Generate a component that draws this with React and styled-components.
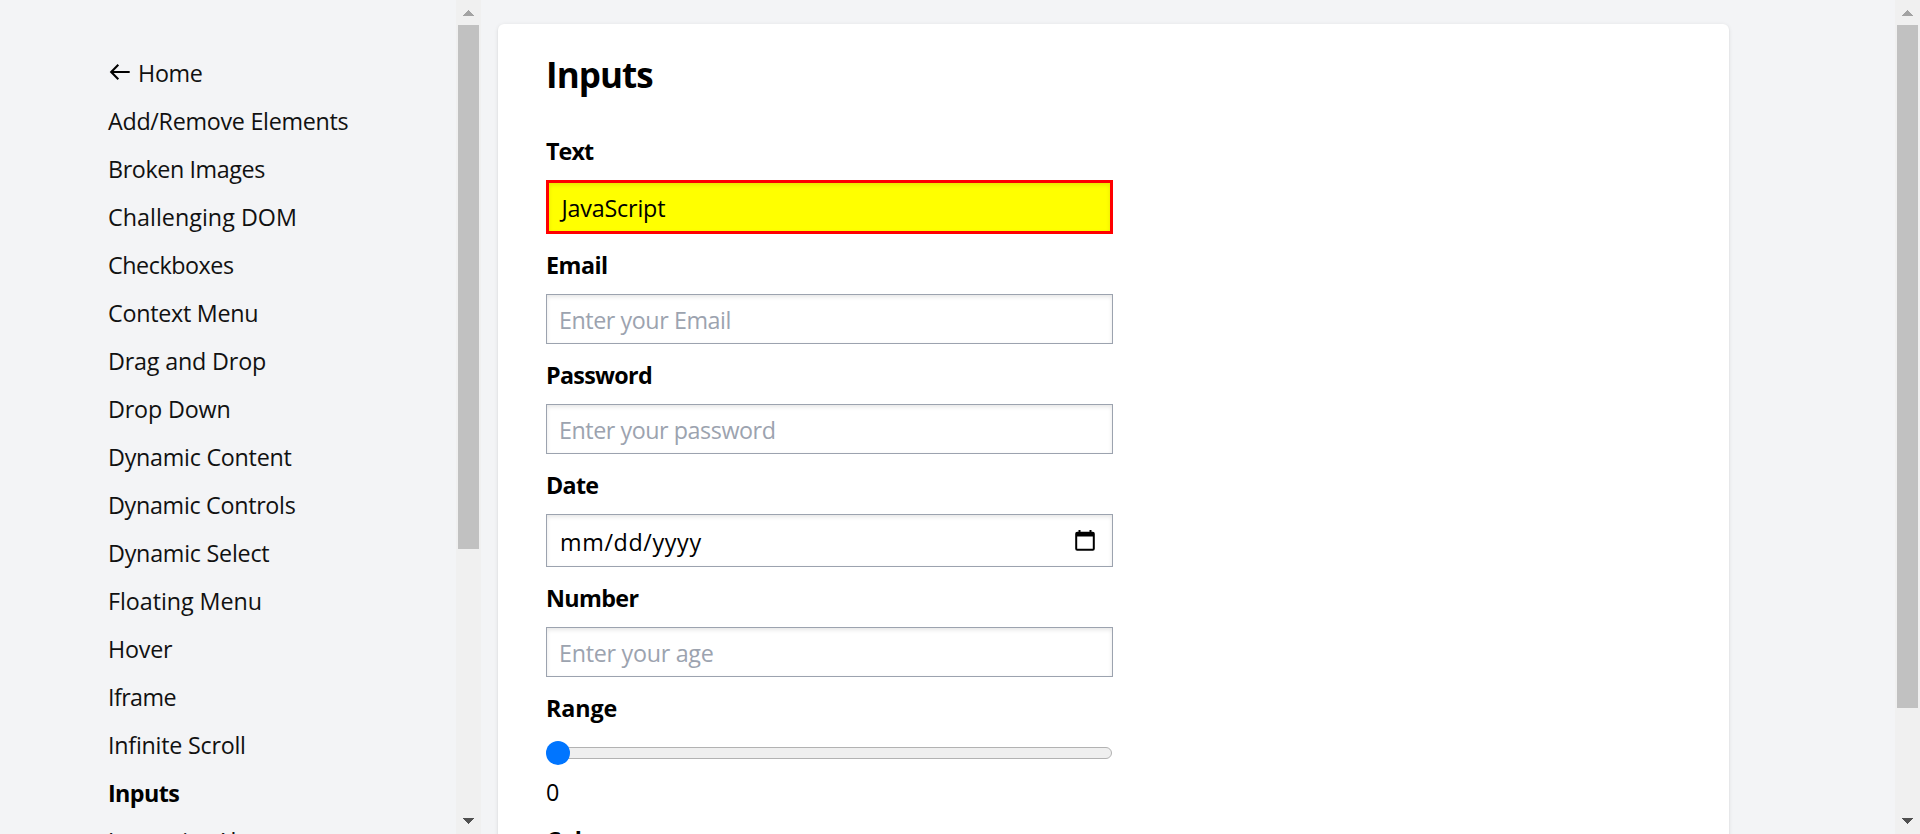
import React from "react";
import styled, { createGlobalStyle } from "styled-components";

const GlobalStyle = createGlobalStyle`
  *, *::before, *::after { box-sizing: border-box; }
  html, body { margin: 0; height: 100%; overflow: hidden; }
  body {
    background: #f3f4f6;
    color: #000;
    font-family: "Segoe UI", "Open Sans", "Noto Sans", sans-serif;
    font-size: 23.3px;
    line-height: 36px;
  }
`;

const Page = styled.div`
  display: flex;
  height: 834px;
  overflow: hidden;
`;

const Sidebar = styled.nav`
  flex: none;
  width: 456px;
  padding: 55px 0 0 108px;
  display: flex;
  flex-direction: column;
  gap: 12px;
`;

const NavItem = styled.a`
  flex: none;
  display: flex;
  align-items: center;
  height: 36px;
  white-space: nowrap;
  color: ${(p) => (p.$active ? "#000" : "#111")};
  font-weight: ${(p) => (p.$active ? 700 : 400)};
  letter-spacing: ${(p) => p.$tracking || 0}px;
`;

const Arrow = styled.svg`
  flex: none;
  width: 24px;
  height: 24px;
  margin: -2px 6px 0 0;
`;

const Main = styled.main`
  flex: 1;
  display: flex;
  padding: 24px 166px 0 17px;
`;

const Card = styled.section`
  flex: 1;
  height: 900px;
  padding: 24px 48px;
  background: #fff;
  border-radius: 6px;
  box-shadow: 0 1px 4px rgba(0, 0, 0, 0.1), 0 1px 2px rgba(0, 0, 0, 0.06);
`;

const Title = styled.h1`
  margin: 0 0 30px;
  height: 54px;
  font-size: 35px;
  line-height: 54px;
  font-weight: 700;
  letter-spacing: -0.95px;
`;

const Form = styled.div`
  width: 567px;
  display: flex;
  flex-direction: column;
  gap: 12px;
`;

const Label = styled.div`
  height: 36px;
  padding-top: 1px;
  font-weight: 700;
  white-space: nowrap;
  letter-spacing: ${(p) => p.$tracking || 0}px;
`;

const Field = styled.div`
  display: flex;
  align-items: center;
  justify-content: space-between;
  height: ${(p) => p.$height || 50}px;
  padding: 2px 17px 0 ${(p) => p.$indent || 12}px;
  border: 1px solid #9ca3af;
  background: #fff;
  box-shadow: inset 0 2px 4px rgba(0, 0, 0, 0.1);
  color: ${(p) => (p.$filled ? "#000" : "#9ca3af")};
  white-space: nowrap;
  letter-spacing: ${(p) => p.$tracking || 0}px;
`;

const HighlightedField = styled(Field)`
  border: 3px solid #f00;
  background: #ff0;
`;

const CalendarIcon = styled.svg`
  width: 20px;
  height: 22px;
  margin-top: -1px;
`;

const RangeRow = styled.div`
  display: flex;
  align-items: center;
  height: 32px;
  margin-bottom: -8px;
  padding-top: 8px;
`;

const Thumb = styled.div`
  flex: none;
  width: 24px;
  height: 24px;
  margin-top: -8px;
  border-radius: 50%;
  background: #0075ff;
  z-index: 1;
`;

const Track = styled.div`
  flex: 1;
  height: 12px;
  margin: -8px 1px 0 -22px;
  border: 1px solid #b2b2b2;
  border-radius: 6px;
  background: #efefef;
`;

const Output = styled.div`
  height: 36px;
  padding-top: 1px;
`;

const ScrollbarTrack = styled.div`
  flex: none;
  width: 25px;
  height: 834px;
  padding: 10px 2px;
  display: flex;
  flex-direction: column;
  align-items: center;
  background: #f0f0f0;
`;

const ScrollbarThumb = styled.div`
  width: 21px;
  height: ${(p) => p.$height}px;
  margin: 9px 0 auto;
  background: #c1c1c1;
`;

const ScrollArrow = styled.svg`
  flex: none;
  width: 11px;
  height: 6px;
`;

function Scrollbar({ thumb }) {
  return (
    <ScrollbarTrack>
      <ScrollArrow viewBox="0 0 11 6" shapeRendering="crispEdges">
        <path d="M0 6L5.5 0L11 6Z" fill="#a3a3a3" />
      </ScrollArrow>
      <ScrollbarThumb $height={thumb} />
      <ScrollArrow viewBox="0 0 11 6" shapeRendering="crispEdges">
        <path d="M0 0L5.5 6L11 0Z" fill="#505050" />
      </ScrollArrow>
    </ScrollbarTrack>
  );
}

const links = [
  ["Add/Remove Elements", -0.29],
  ["Broken Images", -0.4],
  ["Challenging DOM", 0.03],
  ["Checkboxes", -0.45],
  ["Context Menu", -0.27],
  ["Drag and Drop", -0.17],
  ["Drop Down", -0.16],
  ["Dynamic Content", -0.26],
  ["Dynamic Controls", -0.3],
  ["Dynamic Select", -0.24],
  ["Floating Menu", -0.05],
  ["Hover", -0.22],
  ["Iframe", -0.6],
  ["Infinite Scroll", -0.24],
  ["Inputs", -0.6],
  ["Javascript Alerts", -0.2],
];

export default function App() {
  return (
    <>
      <GlobalStyle />
      <Page>
        <Sidebar>
          <NavItem $tracking={-0.3}>
            <Arrow viewBox="0 0 24 24" fill="none" stroke="#000" strokeWidth="2.1">
              <path d="M21.7 12H3.2M10.3 4.8L3.2 12L10.3 19.2" />
            </Arrow>
            Home
          </NavItem>
          {links.map(([name, tracking]) => (
            <NavItem key={name} $active={name === "Inputs"} $tracking={tracking}>
              {name}
            </NavItem>
          ))}
        </Sidebar>
        <Scrollbar thumb={524} />
        <Main>
          <Card>
            <Title>Inputs</Title>
            <Form>
              <Label $tracking={-0.9}>Text</Label>
              <HighlightedField $height={54} $indent={12.5} $filled $tracking={-0.19}>
                JavaScript
              </HighlightedField>
              <Label $tracking={-0.5}>Email</Label>
              <Field $tracking={-0.44}>Enter your Email</Field>
              <Label $tracking={-0.7}>Password</Label>
              <Field $tracking={-0.45}>Enter your password</Field>
              <Label $tracking={-0.7}>Date</Label>
              <Field $height={53} $indent={13} $filled $tracking={0.63}>
                mm/dd/yyyy
                <CalendarIcon viewBox="0 0 20 22">
                  <path
                    fillRule="evenodd"
                    d="M3.5 0h2v1.8h9V0h2v1.8h1.3a2 2 0 0 1 2 2v15a2 2 0 0 1-2 2H2.2a2 2 0 0 1-2-2v-15a2 2 0 0 1 2-2h1.3zM2.2 6.4v12.4h15.6V6.4z"
                  />
                </CalendarIcon>
              </Field>
              <Label $tracking={-0.65}>Number</Label>
              <Field $tracking={-0.28}>Enter your age</Field>
              <Label $tracking={-0.1}>Range</Label>
              <RangeRow>
                <Thumb />
                <Track />
              </RangeRow>
              <Output>0</Output>
              <Label $tracking={-0.3}>Color</Label>
            </Form>
          </Card>
        </Main>
        <Scrollbar thumb={683} />
      </Page>
    </>
  );
}
